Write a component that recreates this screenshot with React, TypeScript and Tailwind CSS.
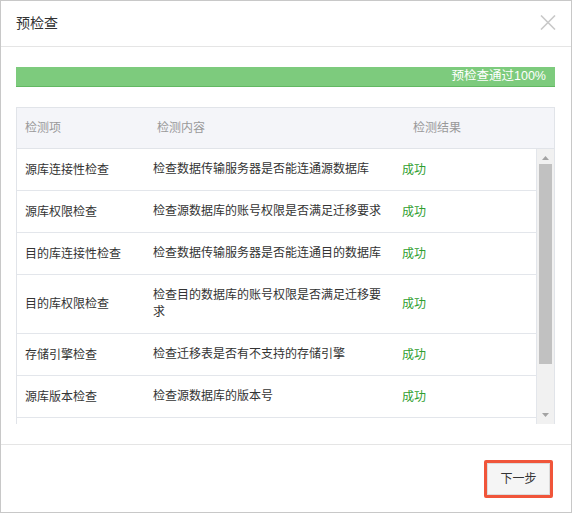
import type { ReactNode } from "react";

type Check = { item: string; desc: string; result: string };

const CHECKS: Check[] = [
  { item: "源库连接性检查", desc: "检查数据传输服务器是否能连通源数据库", result: "成功" },
  { item: "源库权限检查", desc: "检查源数据库的账号权限是否满足迁移要求", result: "成功" },
  { item: "目的库连接性检查", desc: "检查数据传输服务器是否能连通目的数据库", result: "成功" },
  { item: "目的库权限检查", desc: "检查目的数据库的账号权限是否满足迁移要求", result: "成功" },
  { item: "存储引擎检查", desc: "检查迁移表是否有不支持的存储引擎", result: "成功" },
  { item: "源库版本检查", desc: "检查源数据库的版本号", result: "成功" },
];

const FONT = { fontFamily: '"Liberation Sans", "Noto Sans CJK SC", sans-serif' };

/* ------------------------------------------------------------------ Row */
function Row({ check }: { check: Check }) {
  const tall = check.desc.length > 19;
  return (
    <div
      className={`grid grid-cols-[128px_249px_1fr] items-center border-b border-[#e3e6eb] text-[12px] text-[#333] ${
        tall ? "h-[59px]" : "h-[42px]"
      }`}
    >
      <div className="pl-[8px]">{check.item}</div>
      <div className="pl-[8px] pr-[10px] leading-[17px]">{check.desc}</div>
      <div className="pl-[8px] text-[#2f9e2f]">{check.result}</div>
    </div>
  );
}

function Arrow({ up }: { up?: boolean }) {
  return (
    <svg width="7" height="4" viewBox="0 0 7 4" className="block">
      <path d={up ? "M0 4 L3.5 0 L7 4 Z" : "M0 0 L3.5 4 L7 0 Z"} fill="#a3a3a3" />
    </svg>
  );
}

function Scrollbar() {
  return (
    <div className="flex w-[17px] flex-col items-center bg-[#f1f1f1] pt-[7px] pb-[7px]">
      <Arrow up />
      <div className="mt-[4px] h-[200px] w-[13px] bg-[#c1c1c1]" />
      <div className="flex-1" />
      <Arrow />
    </div>
  );
}

function Table({ children }: { children: ReactNode }) {
  return (
    <div className="mt-[20px] w-[539px] border-x border-t border-[#e1e4e9]">
      <div className="grid h-[41px] grid-cols-[132px_256px_1fr] items-center border-b border-[#e1e4e9] bg-[#f4f5f9] text-[12px] text-[#999]">
        <div className="pl-[8px]">检测项</div>
        <div className="pl-[8px]">检测内容</div>
        <div className="pl-[8px]">检测结果</div>
      </div>
      <div className="flex h-[275px]">
        <div className="flex-1 overflow-hidden border-r border-[#e3e6eb]">{children}</div>
        <Scrollbar />
      </div>
    </div>
  );
}

export default function App() {
  return (
    <div className="flex h-[513px] w-[572px] flex-col border border-[#c8c8c8] bg-white" style={FONT}>
      {/* header */}
      <div className="flex h-[46px] shrink-0 items-center justify-between border-b border-[#e5e5e5] pl-[15px] pr-[15px]">
        <span className="text-[14px] text-[#333]">预检查</span>
        <svg width="16" height="15" viewBox="0 0 16 15" className="mb-[2px]">
          <path d="M1 0.5 L15 14.5 M15 0.5 L1 14.5" stroke="#c9c9c9" strokeWidth="1.6" />
        </svg>
      </div>

      {/* body */}
      <div className="px-[15px] pt-[20px]">
        <div className="flex h-[20px] w-[539px] items-center justify-end border-b border-[#62b862] bg-[#7dcb7d] pr-[9px] text-[12.5px] text-white">
          预检查通过100%
        </div>
        <Table>
          {CHECKS.map((c) => (
            <Row key={c.item} check={c} />
          ))}
        </Table>
      </div>

      {/* footer */}
      <div className="mt-[20px] flex flex-1 justify-end border-t border-[#e5e5e5] pr-[18px] pt-[15px]">
        <div className="h-[38px] rounded-[2px] border-[3px] border-[#f0553a]">
          <button className="h-full w-[63px] border border-[#dcdcdc] bg-[#f5f5f5] text-[12px] text-[#333]">
            下一步
          </button>
        </div>
      </div>
    </div>
  );
}
